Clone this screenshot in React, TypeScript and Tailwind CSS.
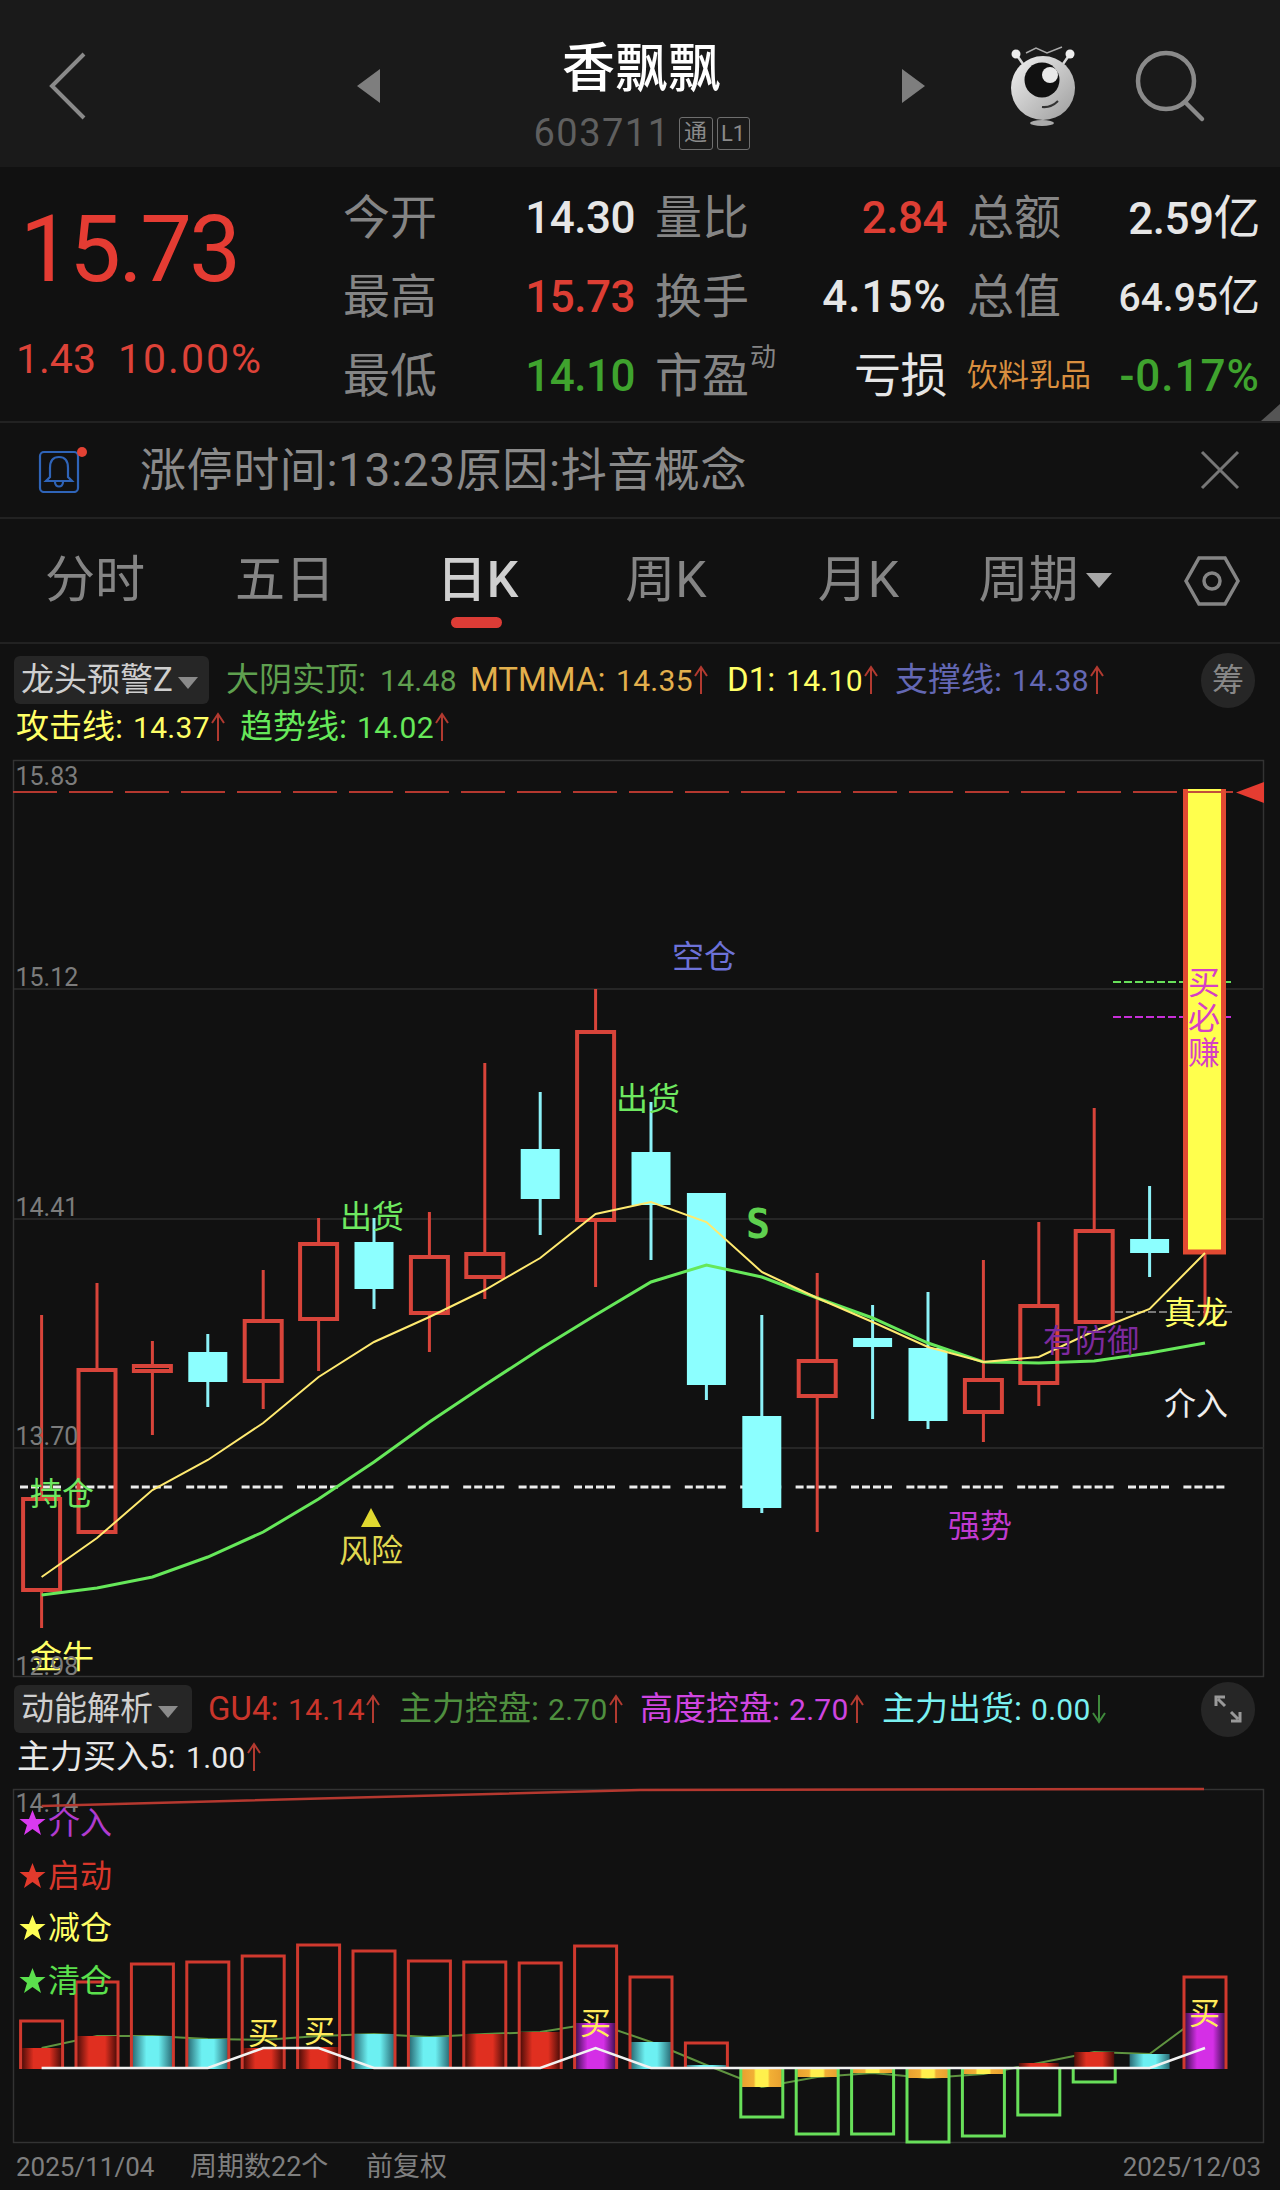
import type { ReactNode } from "react";

const X = (i: number) => 41.6 + 55.4 * i;

type Candle = { k: "r" | "c"; hi: number; top: number; bot: number; lo: number };

const candles: Candle[] = [
  { k: "r", hi: 1315, top: 1497, bot: 1592, lo: 1628 },
  { k: "r", hi: 1283, top: 1368, bot: 1534, lo: 1534 },
  { k: "r", hi: 1341, top: 1364, bot: 1373, lo: 1435 },
  { k: "c", hi: 1334, top: 1352, bot: 1382, lo: 1407 },
  { k: "r", hi: 1270, top: 1319, bot: 1383, lo: 1409 },
  { k: "r", hi: 1218, top: 1242, bot: 1321, lo: 1371 },
  { k: "c", hi: 1218, top: 1242, bot: 1289, lo: 1309 },
  { k: "r", hi: 1212, top: 1255, bot: 1315, lo: 1352 },
  { k: "r", hi: 1063, top: 1252, bot: 1279, lo: 1299 },
  { k: "c", hi: 1092, top: 1149, bot: 1199, lo: 1235 },
  { k: "r", hi: 989, top: 1030, bot: 1222, lo: 1287 },
  { k: "c", hi: 1102, top: 1152, bot: 1205, lo: 1260 },
  { k: "c", hi: 1193, top: 1193, bot: 1385, lo: 1400 },
  { k: "c", hi: 1315, top: 1416, bot: 1508, lo: 1513 },
  { k: "r", hi: 1273, top: 1359, bot: 1398, lo: 1532 },
  { k: "c", hi: 1305, top: 1338, bot: 1347, lo: 1419 },
  { k: "c", hi: 1292, top: 1348, bot: 1421, lo: 1429 },
  { k: "r", hi: 1260, top: 1378, bot: 1414, lo: 1442 },
  { k: "r", hi: 1222, top: 1304, bot: 1385, lo: 1406 },
  { k: "r", hi: 1108, top: 1229, bot: 1324, lo: 1324 },
  { k: "c", hi: 1186, top: 1239, bot: 1253, lo: 1277 },
];

const maYellow = [1577, 1538, 1490, 1460, 1423, 1377, 1342, 1317, 1290, 1258, 1214, 1202, 1222, 1272, 1298, 1322, 1347, 1362, 1357, 1331, 1309, 1253];
const maGreen = [1595, 1588, 1577, 1557, 1532, 1499, 1462, 1422, 1385, 1349, 1315, 1282, 1265, 1277, 1298, 1318, 1343, 1362, 1363, 1361, 1353, 1343];

const toLine = (ys: number[]) => ys.map((y, i) => `${X(i)},${y}`).join(" ");

// lower panel
const outlineUp = [2021, 1982, 1964, 1962, 1956, 1945, 1951, 1961, 1962, 1963, 1946, 1977, 2043];
const outlineDown: [number, number][] = [[13, 2117], [14, 2134], [15, 2134], [16, 2142], [17, 2136], [18, 2115], [19, 2082]];
const fills: { i: number; g: string; y: number }[] = [
  { i: 0, g: "url(#barRed)", y: 2048 },
  { i: 1, g: "url(#barRed)", y: 2036 },
  { i: 2, g: "url(#barCyan)", y: 2036 },
  { i: 3, g: "url(#barCyan)", y: 2039 },
  { i: 4, g: "url(#barRed)", y: 2048 },
  { i: 5, g: "url(#barRed)", y: 2047 },
  { i: 6, g: "url(#barCyan)", y: 2034 },
  { i: 7, g: "url(#barCyan)", y: 2037 },
  { i: 8, g: "url(#barRed)", y: 2034 },
  { i: 9, g: "url(#barRed)", y: 2032 },
  { i: 10, g: "url(#barPurple)", y: 2023 },
  { i: 11, g: "url(#barCyan)", y: 2042 },
  { i: 12, g: "url(#barCyan)", y: 2065 },
  { i: 18, g: "url(#barRed)", y: 2063 },
  { i: 19, g: "url(#barRed)", y: 2052 },
  { i: 20, g: "url(#barCyan)", y: 2054 },
  { i: 21, g: "url(#barPurple)", y: 2013 },
];
const negFills: [number, number][] = [[13, 2087], [14, 2077], [15, 2073], [16, 2078], [17, 2074]];
const thinLine = [2048, 2036, 2036, 2039, 2040, 2036, 2034, 2037, 2034, 2032, 2023, 2042, 2065, 2087, 2077, 2073, 2078, 2074, 2063, 2052, 2054, 2013];
const whiteLine = [2068, 2068, 2068, 2068, 2048, 2048, 2068, 2068, 2068, 2068, 2048, 2068, 2068, 2068, 2068, 2068, 2068, 2068, 2068, 2068, 2068, 2048];

function UpArrow({ color = "#b23a30" }: { color?: string }) {
  return (
    <svg width="16" height="30" viewBox="0 0 16 30" fill="none" stroke={color} strokeWidth="2" className="shrink-0 self-center">
      <path d="M8 29V2M2 11L8 2L14 11" />
    </svg>
  );
}

function DownArrow() {
  return (
    <svg width="16" height="30" viewBox="0 0 16 30" fill="none" stroke="#3f8a3c" strokeWidth="2" className="shrink-0 self-center">
      <path d="M8 1V28M2 19L8 28L14 19" />
    </svg>
  );
}

type IndProps = { w: string; labelW: string; label: string; value: string; color: string; down?: boolean; arrow?: boolean };

function Ind({ w, labelW, label, value, color, down, arrow = true }: IndProps) {
  return (
    <div className={`flex items-baseline shrink-0 ${w} ${color}`}>
      <span className={`text-[33px] whitespace-nowrap ${labelW}`}>{label}:</span>
      <span className="text-[30px] tracking-[0.3px]">{value}</span>
      {arrow && (down ? <DownArrow /> : <UpArrow />)}
    </div>
  );
}

function Tag({ name, w }: { name: string; w: string }) {
  return (
    <div className={`flex h-[48px] items-center rounded-md bg-[#262626] pl-[7px] text-[33px] text-[#cfcfcf] ${w}`}>
      <span className="whitespace-nowrap">{name}</span>
      <svg width="22" height="14" viewBox="0 0 22 14" className="ml-[4px] mt-[6px]">
        <path d="M1 1H21L11 13Z" fill="#8a8a8a" />
      </svg>
    </div>
  );
}

function Stat({ label, value, color = "text-[#e6e6e6]" }: { label: ReactNode; value: ReactNode; color?: string }) {
  return (
    <>
      <div className="whitespace-nowrap text-[47px] text-[#858585]">{label}</div>
      <div className={`pr-[20px] text-right text-[44px] tracking-[-0.5px] font-medium ${color}`}>{value}</div>
    </>
  );
}

function T({ x, y, fill, size = 32, children }: { x: number; y: number; fill: string; size?: number; children: ReactNode }) {
  return (
    <text x={x} y={y} fill={fill} fontSize={size}>
      {children}
    </text>
  );
}

function Axis({ y, children }: { y: number; children: string }) {
  return <T x={15.5} y={y} fill="#7c7c7c" size={25}>{children}</T>;
}

function MainChart() {
  return (
    <svg width="1280" height="918" viewBox="0 760 1280 918" className="block overflow-visible">
      <rect x="13.5" y="760.5" width="1250" height="916" fill="none" stroke="#333" strokeWidth="1.5" />
      <path d="M14 989H1264M14 1219H1264M14 1448H1264" stroke="#2e2e2e" strokeWidth="1.5" />

      <line x1="13" y1="792" x2="1236" y2="792" stroke="#b5382f" strokeWidth="2" strokeDasharray="44 12" />
      <path d="M1236 792.5L1264 782V803Z" fill="#e53c31" />
      <line x1="1113" y1="982" x2="1232" y2="982" stroke="#68e05a" strokeWidth="2" strokeDasharray="8 3" />
      <line x1="1113" y1="1017" x2="1232" y2="1017" stroke="#c82fd8" strokeWidth="2" strokeDasharray="8 3" />
      <line x1="1115" y1="1312" x2="1232" y2="1312" stroke="#777" strokeWidth="2" strokeDasharray="8 3" />
      <line x1="20" y1="1487" x2="1226" y2="1487" stroke="#ececec" strokeWidth="3" strokeDasharray="8 3 8 3 8 3 8 14.4" />

      {candles.map((c, i) => {
        const x = X(i);
        if (c.k === "r") {
          return (
            <g key={i} stroke="#d8443a" fill="none">
              <line x1={x} x2={x} y1={c.hi} y2={c.top} strokeWidth="3" />
              <line x1={x} x2={x} y1={c.bot} y2={c.lo} strokeWidth="3" />
              <rect x={x - 18.5} y={c.top + 2} width="37" height={c.bot - c.top - 4} strokeWidth="4" />
            </g>
          );
        }
        return (
          <g key={i}>
            <line x1={x} x2={x} y1={c.hi} y2={c.lo} stroke="#8cf2f8" strokeWidth="3" />
            <rect x={x - 19.5} y={c.top} width="39" height={c.bot - c.top} fill="#8cffff" />
          </g>
        );
      })}
      <line x1={X(21)} x2={X(21)} y1={1254} y2={1320} stroke="#d8443a" strokeWidth="3" />
      <rect x="1185" y="789" width="39" height="465" fill="#ffff4d" />
      <path d="M1185.5 789V1252H1223.5V789" fill="none" stroke="#e24a32" strokeWidth="5" />
      <line x1="1188" y1="792" x2="1221" y2="792" stroke="#c0503a" strokeWidth="2" />

      <polyline points={toLine(maGreen)} fill="none" stroke="#66e85a" strokeWidth="3" />
      <polyline points={toLine(maYellow)} fill="none" stroke="#ffea70" strokeWidth="2" />

      <T x={672} y={968} fill="#6d72d8">空仓</T>
      <T x={340} y={1228} fill="#6ee860">出货</T>
      <T x={616} y={1110} fill="#6ee860">出货</T>
      <text x="746" y="1238" fill="#5fd04f" fontSize="40" fontWeight="700" fontFamily="'DejaVu Sans Mono', monospace">S</text>
      <T x={1164} y={1324} fill="#ffff66">真龙</T>
      <T x={1043} y={1352} fill="#7e2a9e">有防御</T>
      <T x={1164} y={1415} fill="#eeeeee">介入</T>
      <T x={948} y={1537} fill="#c03ad0">强势</T>
      <path d="M371 1508L381 1527H361Z" fill="#e0d830" />
      <T x={339} y={1562} fill="#e0d850">风险</T>
      <T x={30} y={1505} fill="#6ee860">持仓</T>
      <T x={30} y={1668} fill="#ffff66">金牛</T>
      <T x={1188} y={994} fill="#d63fc4">买</T>
      <T x={1188} y={1029} fill="#d63fc4">必</T>
      <T x={1188} y={1064} fill="#d63fc4">赚</T>

      <Axis y={785}>15.83</Axis>
      <Axis y={986}>15.12</Axis>
      <Axis y={1216}>14.41</Axis>
      <Axis y={1445}>13.70</Axis>
      <Axis y={1675}>12.98</Axis>
    </svg>
  );
}

function Legend({ y, star, text, label }: { y: number; star: string; text: string; label: string }) {
  return (
    <>
      <path
        transform={`translate(32.5 ${y - 11})`}
        d="M0 -13L3.5 -4H13L5.5 2L8.5 12L0 6L-8.5 12L-5.5 2L-13 -4H-3.5Z"
        fill={star}
      />
      <T x={48} y={y} fill={text}>{label}</T>
    </>
  );
}

function LowerChart() {
  return (
    <svg width="1280" height="355" viewBox="0 1789 1280 355" className="block overflow-visible">
      <defs>
        <linearGradient id="barRed">
          <stop offset="0" stopColor="#4c0d08" />
          <stop offset="0.3" stopColor="#e02f20" />
          <stop offset="0.7" stopColor="#e02f20" />
          <stop offset="1" stopColor="#4c0d08" />
        </linearGradient>
        <linearGradient id="barCyan">
          <stop offset="0" stopColor="#2a6c76" />
          <stop offset="0.35" stopColor="#6cf0f2" />
          <stop offset="0.65" stopColor="#6cf0f2" />
          <stop offset="1" stopColor="#2a6c76" />
        </linearGradient>
        <linearGradient id="barPurple">
          <stop offset="0" stopColor="#3f0f52" />
          <stop offset="0.3" stopColor="#d42fe6" />
          <stop offset="0.7" stopColor="#d42fe6" />
          <stop offset="1" stopColor="#3f0f52" />
        </linearGradient>
        <linearGradient id="barGold">
          <stop offset="0" stopColor="#e8a030" />
          <stop offset="0.3" stopColor="#f2b035" />
          <stop offset="0.35" stopColor="#fff04d" />
          <stop offset="0.65" stopColor="#fff04d" />
          <stop offset="0.7" stopColor="#f2b035" />
          <stop offset="1" stopColor="#e8a030" />
        </linearGradient>
      </defs>
      <rect x="13.5" y="1789.5" width="1250" height="353" fill="none" stroke="#333" strokeWidth="1.5" />
      <T x={15.5} y={1812} fill="#7c7c7c" size={25}>14.14</T>
      <path d="M41.6 1806L640 1790L1204 1789" fill="none" stroke="#b5382f" strokeWidth="2.5" />

      <polyline points={toLine(thinLine)} fill="none" stroke="#5f9440" strokeWidth="2" />

      {fills.map(b => (
        <rect key={b.i} x={X(b.i) - 20} y={b.y} width="40" height={2069 - b.y} fill={b.g} />
      ))}
      {negFills.map(([i, y]) => (
        <rect key={i} x={X(i) - 20} y={2069} width="40" height={y - 2069} fill="url(#barGold)" />
      ))}
      {outlineUp.map((y, i) => (
        <path key={i} d={`M${X(i) - 21} 2069V${y}H${X(i) + 21}V2069`} fill="none" stroke="#d0392e" strokeWidth="3" />
      ))}
      <path d={`M${X(21) - 21} 2069V1977H${X(21) + 21}V2069`} fill="none" stroke="#d0392e" strokeWidth="3" />
      {outlineDown.map(([i, y]) => (
        <path key={i} d={`M${X(i) - 21} 2069V${y}H${X(i) + 21}V2069`} fill="none" stroke="#68e05a" strokeWidth="3" />
      ))}

      <polyline points={toLine(whiteLine)} fill="none" stroke="#f2f2f2" strokeWidth="2.5" />

      <Legend y={1834} star="#d93af0" text="#b03bcf" label="介入" />
      <Legend y={1887} star="#e23a2c" text="#d8372b" label="启动" />
      <Legend y={1939} star="#ffff55" text="#ffff66" label="减仓" />
      <Legend y={1992} star="#5be04d" text="#5be04d" label="清仓" />

      <T x={248} y={2044} fill="#ffeb5a" size={31}>买</T>
      <T x={304} y={2042} fill="#ffeb5a" size={31}>买</T>
      <T x={580} y={2034} fill="#ffeb5a" size={31}>买</T>
      <T x={1189} y={2024} fill="#ffeb5a" size={31}>买</T>
    </svg>
  );
}

export default function App() {
  return (
    <div className="flex h-[2190px] w-[1280px] flex-col overflow-hidden bg-[#111111] font-['Roboto','Noto_Sans_CJK_SC',sans-serif] text-white">
      {/* title bar */}
      <header className="relative flex h-[167px] shrink-0 items-start bg-[#1a1a1a]">
        <svg width="40" height="68" viewBox="0 0 40 68" fill="none" stroke="#8a8a8a" strokeWidth="4" className="ml-[48px] mt-[52px] shrink-0">
          <path d="M36 2L4 34L36 66" />
        </svg>
        <svg width="24" height="34" viewBox="0 0 24 34" className="ml-[269px] mt-[69px] shrink-0">
          <path d="M23 0V34L0 17Z" fill="#7e7e7e" />
        </svg>
        <div className="flex w-[521px] shrink-0 flex-col items-center">
          <div className="mt-[37px] text-[53px] leading-[64px] font-medium text-white">香飘飘</div>
          <div className="mt-[14px] flex items-center">
            <span className="text-[38px] leading-[36px] tracking-[1.5px] text-[#5f5f5f]">603711</span>
            <span className="ml-[8px] flex h-[33px] w-[34px] items-center justify-center rounded-[3px] border border-[#6f6f6f] text-[23px] text-[#8a8a8a]">通</span>
            <span className="ml-[4px] flex h-[33px] w-[33px] items-center justify-center rounded-[3px] border border-[#6f6f6f] text-[22px] text-[#8a8a8a]">L1</span>
          </div>
        </div>
        <svg width="24" height="34" viewBox="0 0 24 34" className="mt-[69px] shrink-0">
          <path d="M0 0V34L23 17Z" fill="#7e7e7e" />
        </svg>
        <svg width="70" height="84" viewBox="1010 44 70 84" className="ml-[83px] mt-[44px] shrink-0">
          <defs>
            <linearGradient id="logoBody" x1="0" y1="0" x2="1" y2="1">
              <stop offset="0" stopColor="#f2f2f2" />
              <stop offset="1" stopColor="#9c9c9c" />
            </linearGradient>
          </defs>
          <path d="M1027 53L1037 48L1048 53L1063 47" fill="none" stroke="#aaa" strokeWidth="1.5" />
          <path d="M1017 54L1024 64M1071 54L1064 64" stroke="#d8d8d8" strokeWidth="2.5" />
          <circle cx="1017" cy="54" r="4.5" fill="#eee" />
          <circle cx="1071" cy="54" r="4.5" fill="#eee" />
          <circle cx="1044" cy="88" r="32" fill="url(#logoBody)" />
          <circle cx="1043" cy="80" r="17.5" fill="#111" />
          <circle cx="1051" cy="75" r="8" fill="#e8e8e8" />
          <path d="M1043 107Q1052 108 1059 101" fill="none" stroke="#333" strokeWidth="2" />
          <ellipse cx="1043" cy="123" rx="12" ry="3" fill="#aaa" />
        </svg>
        <svg width="76" height="76" viewBox="0 0 76 76" fill="none" stroke="#8a8a8a" strokeWidth="4.5" strokeLinecap="round" className="ml-[55px] mt-[49px] shrink-0">
          <circle cx="32" cy="32" r="28" />
          <path d="M51 53L68 70" />
        </svg>
      </header>

      {/* quote */}
      <section className="relative flex h-[256px] shrink-0 border-b-2 border-[#222]">
        <div className="w-[343px] shrink-0 pl-[20px]">
          <div className="mt-[38px] text-[92px] leading-[90px] tracking-[-2.5px] text-[#e53c33]">15.73</div>
          <div className="-ml-[4px] mt-[44px] flex text-[41px] leading-[40px] text-[#dd4238]">
            <span className="w-[102px]">1.43</span>
            <span className="tracking-[2px]">10.00%</span>
          </div>
        </div>
        <div className="grid shrink-0 auto-rows-[79px] grid-cols-[90px_222px_90px_222px_90px_203px] items-center pt-[11px] leading-none">
          <Stat label="今开" value="14.30" />
          <Stat label="量比" value="2.84" color="text-[#dd3e34]" />
          <div className="whitespace-nowrap text-[47px] text-[#858585]">总额</div>
          <div className="text-right text-[44px] tracking-[-0.5px] font-medium text-[#e6e6e6]">2.59<span className="text-[47px] font-normal">亿</span></div>

          <Stat label="最高" value="15.73" color="text-[#dd3e34]" />
          <Stat label="换手" value={<span className="tracking-[1px]">4.15%</span>} />
          <div className="whitespace-nowrap text-[47px] text-[#858585]">总值</div>
          <div className="text-right text-[39px] font-medium text-[#e6e6e6]">64.95<span className="text-[42px] font-normal">亿</span></div>

          <Stat label="最低" value="14.10" color="text-[#3fa32e]" />
          <Stat
            label={
              <span className="relative">
                市盈
                <span className="absolute left-[95px] top-[-4px] text-[26px]">动</span>
              </span>
            }
            value={<span className="text-[47px] font-normal">亏损</span>}
          />
          <div className="whitespace-nowrap text-[31px] text-[#d98f3f]">饮料乳品</div>
          <div className="text-right text-[44px] tracking-[1px] font-medium text-[#3fa32e]">-0.17%</div>
        </div>
        <div className="absolute bottom-0 right-0 h-0 w-0 border-b-[17px] border-l-[19px] border-b-[#555] border-l-transparent" />
      </section>

      {/* notice */}
      <section className="flex h-[96px] shrink-0 items-center border-b-2 border-[#222] pr-[40px] pl-[38px]">
        <svg width="50" height="46" viewBox="0 0 50 46" fill="none" stroke="#2f64b8" strokeWidth="2.2" className="shrink-0">
          <rect x="2" y="5" width="38" height="40" rx="4" />
          <path d="M21 10C14 10 12 15 12 21V30L8 34H34L30 30V21C30 15 28 10 21 10Z" />
          <path d="M17 35C17 41 25 41 25 35" />
          <circle cx="44" cy="5" r="5" fill="#e34234" stroke="none" />
        </svg>
        <span className="ml-[52px] text-[46px] tracking-[0.6px] whitespace-nowrap text-[#8a8a8a]">涨停时间:13:23原因:抖音概念</span>
        <svg width="40" height="40" viewBox="0 0 40 40" fill="none" stroke="#777" strokeWidth="3" className="ml-auto shrink-0">
          <path d="M2 2L38 38M38 2L2 38" />
        </svg>
      </section>

      {/* period tabs */}
      <nav className="flex h-[125px] shrink-0 items-center border-b-2 border-[#222] text-[50px] text-[#858585]">
        <div className="w-[190px] text-center">分时</div>
        <div className="w-[190px] text-center">五日</div>
        <div className="relative w-[195px] text-center font-medium text-[#cfcfcf]">
          日K
          <div className="absolute left-[71px] top-[74px] h-[11px] w-[51px] rounded-full bg-[#dc3c36]" />
        </div>
        <div className="w-[182px] text-center">周K</div>
        <div className="w-[203px] text-center">月K</div>
        <div className="flex w-[170px] items-center justify-center">
          周期
          <svg width="26" height="15" viewBox="0 0 26 15" className="ml-[7px] shrink-0">
            <path d="M0 0H26L13 15Z" fill="#a8a8a8" />
          </svg>
        </div>
        <svg width="56" height="52" viewBox="0 0 56 52" fill="none" stroke="#858585" strokeWidth="3.5" className="ml-[54px] shrink-0">
          <path d="M2 26L15 3H41L54 26L41 49H15Z" />
          <circle cx="28" cy="26" r="8" />
        </svg>
      </nav>

      {/* main indicator legend */}
      <section className="h-[116px] shrink-0 pt-[12px]">
        <div className="flex h-[48px] items-center pl-[14px]">
          <Tag name="龙头预警Z" w="w-[195px]" />
          <div className="ml-[17px] flex">
            <Ind w="w-[244px]" labelW="w-[154px]" label="大阴实顶" value="14.48" color="text-[#5fa04f]" arrow={false} />
            <Ind w="w-[257px]" labelW="w-[146px]" label="MTMMA" value="14.35" color="text-[#e3b04d]" />
            <Ind w="w-[168px]" labelW="w-[59px]" label="D1" value="14.10" color="text-[#ffff66]" />
            <Ind w="w-[220px]" labelW="w-[117px]" label="支撑线" value="14.38" color="text-[#6468b4]" />
          </div>
          <div className="ml-[86px] flex h-[55px] w-[54px] shrink-0 items-center justify-center rounded-full bg-[#262626] text-[32px] text-[#888]">筹</div>
        </div>
        <div className="mt-[5px] flex h-[36px] items-center pl-[16px]">
          <Ind w="w-[224px]" labelW="w-[117px]" label="攻击线" value="14.37" color="text-[#ffff66]" />
          <Ind w="w-[220px]" labelW="w-[117px]" label="趋势线" value="14.02" color="text-[#66e85a]" />
        </div>
      </section>

      <MainChart />

      {/* lower indicator legend */}
      <section className="h-[111px] shrink-0 pt-[7px]">
        <div className="flex h-[48px] items-center pl-[14px]">
          <Tag name="动能解析" w="w-[178px]" />
          <div className="ml-[16px] flex">
            <Ind w="w-[191px]" labelW="w-[80px]" label="GU4" value="14.14" color="text-[#c9352b]" />
            <Ind w="w-[241px]" labelW="w-[149px]" label="主力控盘" value="2.70" color="text-[#4f8f3f]" />
            <Ind w="w-[242px]" labelW="w-[149px]" label="高度控盘" value="2.70" color="text-[#cf45e0]" />
            <Ind w="w-[225px]" labelW="w-[149px]" label="主力出货" value="0.00" color="text-[#7af0f0]" down />
          </div>
          <div className="ml-[94px] flex h-[55px] w-[54px] shrink-0 items-center justify-center rounded-full bg-[#262626]">
            <svg width="30" height="30" viewBox="0 0 30 30" fill="none" stroke="#999" strokeWidth="3">
              <path d="M5 5L12 12M25 25L18 18M3 12V3H12M27 18V27H18" />
            </svg>
          </div>
        </div>
        <div className="mt-[6px] flex h-[36px] items-center pl-[17px]">
          <Ind w="w-[260px]" labelW="w-[169px]" label="主力买入5" value="1.00" color="text-[#e8e8e8]" />
        </div>
      </section>

      <LowerChart />

      {/* date bar */}
      <footer className="flex h-[46px] shrink-0 items-center pl-[16px] pr-[19px] text-[#7f7f7f]">
        <span className="w-[174px] text-[26px]">2025/11/04</span>
        <span className="w-[176px] text-[27px] whitespace-nowrap">周期数22个</span>
        <span className="text-[27px] whitespace-nowrap">前复权</span>
        <span className="ml-auto text-[26px]">2025/12/03</span>
      </footer>
    </div>
  );
}
